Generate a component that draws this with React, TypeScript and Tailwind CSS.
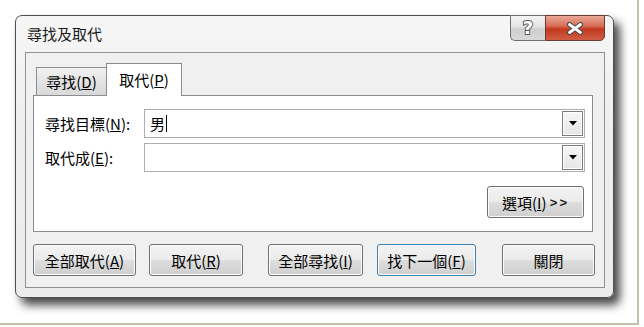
import React from "react";

const font = "font-['Noto_Sans_CJK_TC','Noto_Sans_CJK_SC',sans-serif]";
const btn =
  "flex items-center justify-center h-[32px] rounded-[3px] border border-[#707070] bg-[linear-gradient(#f3f3f3,#ebebeb_48%,#dddddd_52%,#cfcfcf)] shadow-[inset_0_0_0_1px_#fbfbfb] text-[15px] leading-none text-black";

function Combo({ value }: { value?: string }) {
  return (
    <div className="flex items-center w-[441px] h-[29px] border border-[#abadb3] bg-white">
      <div className="flex-1 flex items-center pl-[5px] text-[15px] leading-none text-black">
        {value}
        {value && <span className="ml-[1px] w-[1px] h-[17px] bg-black" />}
      </div>
      <div className="mr-[1px] w-[21px] h-[25px] flex items-center justify-center border border-[#7a7a7a] bg-[linear-gradient(#f6f6f6,#e6e6e6)] shadow-[inset_0_0_0_1px_#ffffff]">
        <svg width="8" height="5" viewBox="0 0 8 5">
          <path d="M0 0H8L4 4.5Z" fill="#000" />
        </svg>
      </div>
    </div>
  );
}

export default function App() {
  return (
    <div className={`w-[644px] h-[327px] bg-white overflow-hidden ${font}`}>
      <div className="w-[639px] h-[325px] border-r-2 border-b-2 border-[#c2c3ad] pl-[15px] pt-[15px]">
        <div className="w-[599px] h-[283px] rounded-[7px] border border-[#4e4e4e] bg-[linear-gradient(#f6f6f6,#eeeeee_40%,#ececec)] shadow-[6px_7px_10px_rgba(0,0,0,0.72)] flex flex-col">
          {/* Title bar */}
          <div className="flex items-start justify-between h-[36px]">
            <div className="pl-[11px] pt-[10px] text-[15px] leading-none text-[#1a1a1a]">尋找及取代</div>
            <div className="flex mr-[8px] -mt-[1px]">
              <div className="w-[35px] h-[26px] flex items-center justify-center border border-[#6f6f6f] border-r-0 rounded-bl-[5px] bg-[linear-gradient(#f4f4f4,#e2e2e2_45%,#cfcfcf_55%,#d8d8d8)]">
                <span className="text-[18px] font-bold leading-none text-white [-webkit-text-stroke:2px_#5a5a5a] [paint-order:stroke_fill] font-['DejaVu_Sans',sans-serif]">?</span>
              </div>
              <div className="w-[60px] h-[26px] flex items-center justify-center border border-[#6b3b30] rounded-br-[5px] bg-[linear-gradient(#e9a898,#d8705a_40%,#c2391f_55%,#cf5f45)]">
                <svg width="18" height="13" viewBox="0 0 18 13">
                  <path d="M3.5 2.5L14.5 10.5M14.5 2.5L3.5 10.5" stroke="#4a4a4a" strokeWidth="5" strokeLinecap="round" />
                  <path d="M3.5 2.5L14.5 10.5M14.5 2.5L3.5 10.5" stroke="#ffffff" strokeWidth="2.8" strokeLinecap="round" />
                </svg>
              </div>
            </div>
          </div>
          {/* Client area */}
          <div className="ml-[9px] w-[580px] h-[236px] border border-[#8f9090] bg-[#f0f0f0] pl-[7px] pt-[10px]">
            {/* Tabs */}
            <div className="flex items-end h-[32px]">
              <div className="ml-[3px] w-[70px] h-[28px] border border-[#898c95] border-b-0 border-r-0 bg-[linear-gradient(#f2f2f2,#e3e3e3_50%,#d9d9d9)] flex items-center justify-center text-[15px] leading-none">
                尋找(<u>D</u>)
              </div>
              <div className="w-[76px] h-[33px] -mb-[1px] relative z-10 border border-[#898c95] border-b-0 bg-white flex items-center justify-center text-[15px] leading-none pb-[2px]">
                取代(<u>P</u>)
              </div>
            </div>
            {/* Panel */}
            <div className="w-[560px] h-[137px] border border-[#898c95] bg-white flex flex-col">
              <div className="flex items-center mt-[13px]">
                <div className="w-[110px] pl-[11px] text-[15px] leading-none">
                  尋找目標(<u>N</u>):
                </div>
                <Combo value="男" />
              </div>
              <div className="flex items-center mt-[5px]">
                <div className="w-[110px] pl-[11px] text-[15px] leading-none">
                  取代成(<u>E</u>):
                </div>
                <Combo />
              </div>
              <div className="flex justify-end mt-[14px] pr-[8px]">
                <div className={`${btn} w-[97px] h-[31px]`}>
                  選項(<u>I</u>)&nbsp;<span className="font-['Liberation_Sans',sans-serif] text-[13px] font-bold tracking-[2px] text-[#222]">&gt;&gt;</span>
                </div>
              </div>
            </div>
            {/* Buttons */}
            <div className="flex mt-[12px]">
              <div className={`${btn} w-[103px]`}>全部取代(<u>A</u>)</div>
              <div className={`${btn} w-[94px] ml-[13px]`}>取代(<u>R</u>)</div>
              <div className={`${btn} w-[95px] ml-[25px]`}>全部尋找(<u>I</u>)</div>
              <div className={`${btn} w-[99px] ml-[14px] !border-[#3c7fb1] shadow-[inset_0_0_0_1px_#9fd8f5,inset_0_0_0_2px_#d8f0fb]`}>找下一個(<u>F</u>)</div>
              <div className={`${btn} w-[93px] ml-[26px]`}>關閉</div>
            </div>
          </div>
        </div>
      </div>
    </div>
  );
}
